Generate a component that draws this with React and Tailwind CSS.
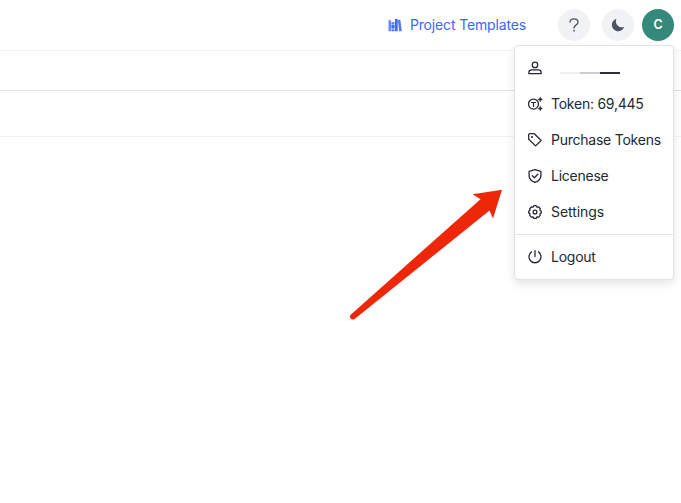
import React from "react";

const stroke = {
  fill: "none",
  stroke: "currentColor",
  strokeWidth: 1.3,
  strokeLinecap: "round",
  strokeLinejoin: "round",
};

function Icon({ children }) {
  return (
    <svg className="size-4 shrink-0" viewBox="0 0 16 16" {...stroke}>
      {children}
    </svg>
  );
}

const UserIcon = () => (
  <Icon>
    <circle cx="8" cy="4.9" r="2.7" />
    <path d="M1.9 13.7v-1.2c0-1.6 1.2-2.6 2.8-2.6h6.6c1.6 0 2.8 1 2.8 2.6v1.2z" />
  </Icon>
);

const TokenIcon = () => (
  <Icon>
    <circle cx="6.5" cy="8.1" r="5" />
    <path d="M4.500 6.500h4M6.500 6.500v3.900" strokeWidth="1.2" />
    <path
      d="M13.300 1l.7 1.600 1.700.8-1.700.8-.7 1.700-.8-1.700-1.700-.8 1.700-.8zM13.300 10.100l.7 1.600 1.700.8-1.700.8-.7 1.700-.8-1.700-1.700-.8 1.700-.8z"
      fill="currentColor"
      strokeWidth=".3"
    />
  </Icon>
);

const TagIcon = () => (
  <Icon>
    <path d="M1.700 3v4.200l6.900 6.700 5.600-5.400-6.900-6.800H3c-.8 0-1.300.5-1.300 1.300z" />
    <circle cx="5" cy="5" r="1.050" fill="currentColor" stroke="none" />
  </Icon>
);

const ShieldIcon = () => (
  <Icon>
    <path d="M8 1.700l5.900 1.700v4.300c0 3.100-2.200 5.200-5.900 6.700-3.700-1.500-5.900-3.600-5.900-6.700V3.400z" />
    <path d="M5.300 7.800l2 1.900 3.500-3.500" />
  </Icon>
);

const GearIcon = () => (
  <Icon>
    <path d="M6.800 1.700h2.400l.8 1.500 1.700-.2 1.600 1.700-.3 1.700 1.300.8v1.700l-1.300.8.3 1.700-1.600 1.700-1.700-.2-.8 1.500H6.800L6 12.900l-1.700.2-1.600-1.700.3-1.700-1.300-.8V7.200L3 6.400l-.3-1.700L4.300 3l1.700.2z" />
    <circle cx="8" cy="8" r="1.900" />
  </Icon>
);

const PowerIcon = () => (
  <Icon>
    <path d="M4.500 2.900a6 6 0 1 0 7 0M8 1.700v5.900" />
  </Icon>
);

function Books() {
  return (
    <svg className="h-4 w-4 shrink-0" viewBox="0 0 16 16" fill="#4269f8">
      <path d="M1.500 3.200h2.500v11H1.500z" opacity=".8" />
      <path d="M4.500 5.200h3v1.500h-3zM4.500 8h3v3h-3zM4.500 12.400h3v1.800h-3z" />
      <path d="M4.500 6.500h3v6h-3z" opacity=".55" />
      <path d="M8 2h2.700v12.200H8z" />
      <path d="M10.900 3l2.400-.3 1.500 11.200-2.700.3z" opacity=".9" />
    </svg>
  );
}

function Item({ icon, children }) {
  return (
    <button className="flex h-9 w-full items-center gap-2 pl-3 text-left">
      {icon}
      <span className="whitespace-nowrap">{children}</span>
    </button>
  );
}

function AccountMenu() {
  return (
    <div className="absolute left-[514px] top-[45px] h-[235px] w-[160px] rounded border border-[#e2e3e8] bg-white pt-1 tracking-[-0.24px] text-[#252834] shadow-[0_4px_10px_rgba(0,0,0,0.1)]">
      <div className="flex h-9 items-center pl-3">
        <UserIcon />
        <div className="ml-[17px] mt-[9px] flex h-0.5">
          <span className="w-5 bg-[#efefef]" />
          <span className="w-5 bg-[#cccccd]" />
          <span className="w-5 bg-[#2c2f39]" />
        </div>
      </div>
      <Item icon={<TokenIcon />}>Token: 69,445</Item>
      <Item icon={<TagIcon />}>Purchase Tokens</Item>
      <Item icon={<ShieldIcon />}>Licenese</Item>
      <Item icon={<GearIcon />}><span className="tracking-[-0.08px]">Settings</span></Item>
      <div className="mb-1 mt-1 h-px bg-[#e2e3e8]" />
      <Item icon={<PowerIcon />}>Logout</Item>
    </div>
  );
}

export default function App() {
  return (
    <div className="relative h-[503px] w-[681px] overflow-hidden bg-white font-['Inter',sans-serif] text-sm">
      <header className="flex h-[51px] items-center justify-end border-b border-[#f0f1f3] pr-[7px]">
        <a className="mr-8 flex items-center gap-[7px] text-[#4066fa]">
          <Books />
          <span className="whitespace-nowrap tracking-[-0.15px]">Project Templates</span>
        </a>
        <button className="mr-3 flex size-8 items-center justify-center rounded-full bg-[#f1f2f4] text-[#4b5365]">
          <svg className="size-4" viewBox="0 0 16 16" {...stroke}>
            <path d="M4 5.200C4 3 5.600 1.800 8 1.800s4 1.300 4 3.300c0 1.500-.8 2.200-2.100 3C8.700 8.900 8 9.500 8 11" />
            <circle cx="8" cy="13.700" r=".9" fill="currentColor" stroke="none" />
          </svg>
        </button>
        <button className="mr-2 flex size-8 items-center justify-center rounded-full bg-[#f1f2f4] text-[#4b5365]">
          <svg className="size-4" viewBox="0 0 16 16" fill="currentColor">
            <path d="M6.500 1.800A6.300 6.300 0 1 0 14.200 9.700 5.900 5.900 0 0 1 6.500 1.800z" />
          </svg>
        </button>
        <div className="flex size-8 items-center justify-center rounded-full bg-[#35897a] text-[12.5px] font-semibold text-white">
          C
        </div>
      </header>
      <div className="h-10 border-b border-[#e2e3e7]" />
      <div className="h-[46px] border-b border-[#f0f1f3]" />
      <svg
        className="absolute left-[340px] top-[180px] h-[145px] w-[170px]"
        viewBox="0 0 170 145"
        fill="#ee2708"
      >
        <path d="M162 9.700L132.700 14.300L140.500 19.200L10.700 134.700C8.600 136.800 10.800 140.500 14.300 139.300L149.500 30.500L153 38.500Z" />
      </svg>
      <AccountMenu />
    </div>
  );
}
